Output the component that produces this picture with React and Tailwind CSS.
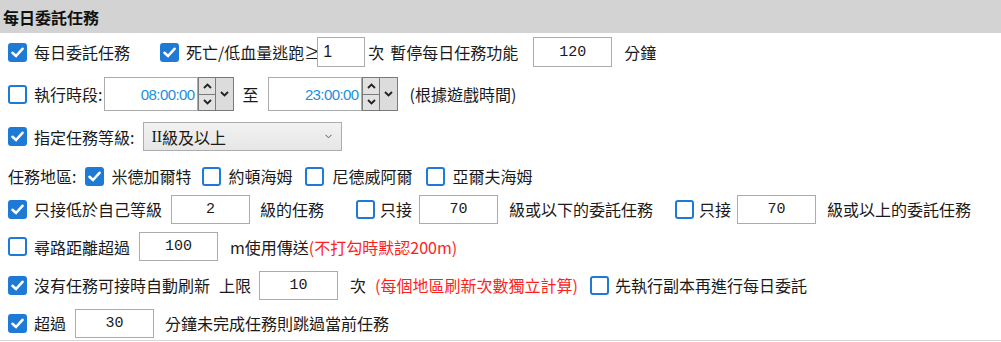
import React from 'react'

// small blue checkbox like the WPF one
const Check = ({ checked, className = '' }) => {
    if (checked) {
        return (
            <span className={`w-[19px] h-[19px] shrink-0 rounded-[3px] bg-[#1f7ad6] flex items-center justify-center ${className}`}>
                <svg width="13" height="11" viewBox="0 0 13 11">
                    <polyline points="1.5,5.8 5,9 11.5,1.8" fill="none" stroke="#fff" strokeWidth="2.6" strokeLinecap="round" strokeLinejoin="round" />
                </svg>
            </span>
        )
    }
    return <span className={`w-[19px] h-[19px] shrink-0 rounded-[3px] border-2 border-[#1f7ad6] bg-white ${className}`}></span>
}

const NumInput = ({ value, className = '' }) => (
    <div className={`w-[79px] h-[29px] shrink-0 border border-[#ababab] bg-white flex items-center justify-center font-['Liberation_Mono',monospace] text-[15px] text-[#1a1a1a] ${className}`}>
        {value}
    </div>
)

const Caret = ({ up }) => (
    <svg width="9" height="6" viewBox="0 0 9 6">
        <polyline points={up ? '1,5 4.5,1.5 8,5' : '1,1 4.5,4.5 8,1'} fill="none" stroke="#222" strokeWidth="1.8" />
    </svg>
)

const TimePicker = ({ value, className = '' }) => (
    <div className={`flex h-[34px] shrink-0 ${className}`}>
        <div className="w-[94px] h-full border border-[#ababab] bg-white flex items-center justify-end pr-[3px] font-['Liberation_Sans',sans-serif] text-[15px] tracking-[-0.6px] text-[#1b8ee0]">
            {value}
        </div>
        <div className="w-[18px] h-full flex flex-col border border-[#7a7a7a] bg-[#e1e1e1]">
            <div className="flex-1 flex items-center justify-center border-b border-[#7a7a7a]"><Caret up /></div>
            <div className="flex-1 flex items-center justify-center"><Caret /></div>
        </div>
        <div className="w-[18px] h-full border border-[#7a7a7a] border-l-0 bg-[#dcdcdc] flex items-center justify-center">
            <Caret />
        </div>
    </div>
)

const Red = ({ children, className = '' }) => <span className={`text-[#ff1e1e] ${className}`}>{children}</span>

const App = () => {
    return (
        <div className="w-[1001px] h-[342px] bg-white overflow-hidden font-['Noto_Sans_CJK_TC','Noto_Sans_CJK_SC',sans-serif] text-[16px] text-[#1a1a1a] leading-none">
            <div className="h-[33px] bg-[#d3d3d3] flex items-center pl-[3px] font-bold text-[16px] text-[#111]">每日委託任務</div>

            <div className="px-[8px]">
                {/* row 1 */}
                <div className="mt-[4px] h-[30px] flex items-center">
                    <Check checked />
                    <span className="ml-[7px]">每日委託任務</span>
                    <Check checked className="ml-[30px]" />
                    <span className="ml-[7px]">死亡/低血量逃跑≥</span>
                    <div className="-ml-[3px] w-[48px] h-[30px] border border-[#ababab] bg-white flex items-center pl-[5px] font-['Liberation_Sans',sans-serif] text-[16px]">1</div>
                    <span className="ml-[3px]">次</span>
                    <span className="ml-[6px]">暫停每日任務功能</span>
                    <NumInput value="120" className="ml-[15px] h-[30px]" />
                    <span className="ml-[12px]">分鐘</span>
                </div>

                {/* row 2 */}
                <div className="mt-[10px] h-[34px] flex items-center">
                    <Check />
                    <span className="ml-[7px]">執行時段:</span>
                    <TimePicker value="08:00:00" className="ml-[2px]" />
                    <span className="ml-[8px]">至</span>
                    <TimePicker value="23:00:00" className="ml-[10px]" />
                    <span className="ml-[11px]">(根據遊戲時間)</span>
                </div>

                {/* row 3 */}
                <div className="mt-[11px] h-[29px] flex items-center">
                    <Check checked />
                    <span className="ml-[7px]">指定任務等級:</span>
                    <div className="ml-[9px] w-[199px] h-[29px] border border-[#acacac] bg-gradient-to-b from-[#f2f2f2] to-[#e6e6e6] flex items-center pl-[7px] pr-[9px]">
                        <span className="font-['Liberation_Serif',serif] text-[16px]">II</span>
                        <span>級及以上</span>
                        <svg className="ml-auto" width="7" height="5" viewBox="0 0 7 5">
                            <polyline points="0.5,0.8 3.5,3.8 6.5,0.8" fill="none" stroke="#555" strokeWidth="1" />
                        </svg>
                    </div>
                </div>

                {/* row 4 */}
                <div className="mt-[10px] h-[30px] flex items-center">
                    <span>任務地區:</span>
                    <Check checked className="ml-[9px]" />
                    <span className="ml-[7px]">米德加爾特</span>
                    <Check className="ml-[11px]" />
                    <span className="ml-[7px]">約頓海姆</span>
                    <Check className="ml-[13px]" />
                    <span className="ml-[8px]">尼德威阿爾</span>
                    <Check className="ml-[13px]" />
                    <span className="ml-[8px]">亞爾夫海姆</span>
                </div>

                {/* row 5 */}
                <div className="mt-[3px] h-[30px] flex items-center">
                    <Check checked />
                    <span className="ml-[7px]">只接低於自己等級</span>
                    <NumInput value="2" className="ml-[9px]" />
                    <span className="ml-[10px]">級的任務</span>
                    <Check className="ml-[32px]" />
                    <span className="ml-[5px]">只接</span>
                    <NumInput value="70" className="ml-[7px]" />
                    <span className="ml-[11px]">級或以下的委託任務</span>
                    <Check className="ml-[22px]" />
                    <span className="ml-[5px]">只接</span>
                    <NumInput value="70" className="ml-[6px]" />
                    <span className="ml-[11px]">級或以上的委託任務</span>
                </div>

                {/* row 6 */}
                <div className="mt-[8px] h-[29px] flex items-center">
                    <Check />
                    <span className="ml-[7px]">尋路距離超過</span>
                    <NumInput value="100" className="ml-[9px]" />
                    <span className="ml-[12px]">m使用傳送</span>
                    <Red>(不打勾時默認200m)</Red>
                </div>

                {/* row 7 */}
                <div className="mt-[9px] h-[30px] flex items-center">
                    <Check checked />
                    <span className="ml-[7px]">沒有任務可接時自動刷新</span>
                    <span className="ml-[9px]">上限</span>
                    <NumInput value="10" className="ml-[8px]" />
                    <span className="ml-[12px]">次</span>
                    <Red className="ml-[9px]">(每個地區刷新次數獨立計算)</Red>
                    <Check className="ml-[12px]" />
                    <span className="ml-[6px]">先執行副本再進行每日委託</span>
                </div>

                {/* row 8 */}
                <div className="mt-[8px] h-[30px] flex items-center">
                    <Check checked />
                    <span className="ml-[7px]">超過</span>
                    <NumInput value="30" className="ml-[9px]" />
                    <span className="ml-[11px]">分鐘未完成任務則跳過當前任務</span>
                </div>
            </div>
            <div className="mt-[2px] border-b border-[#d6d6d6]"></div>
        </div>
    )
}

export default App
